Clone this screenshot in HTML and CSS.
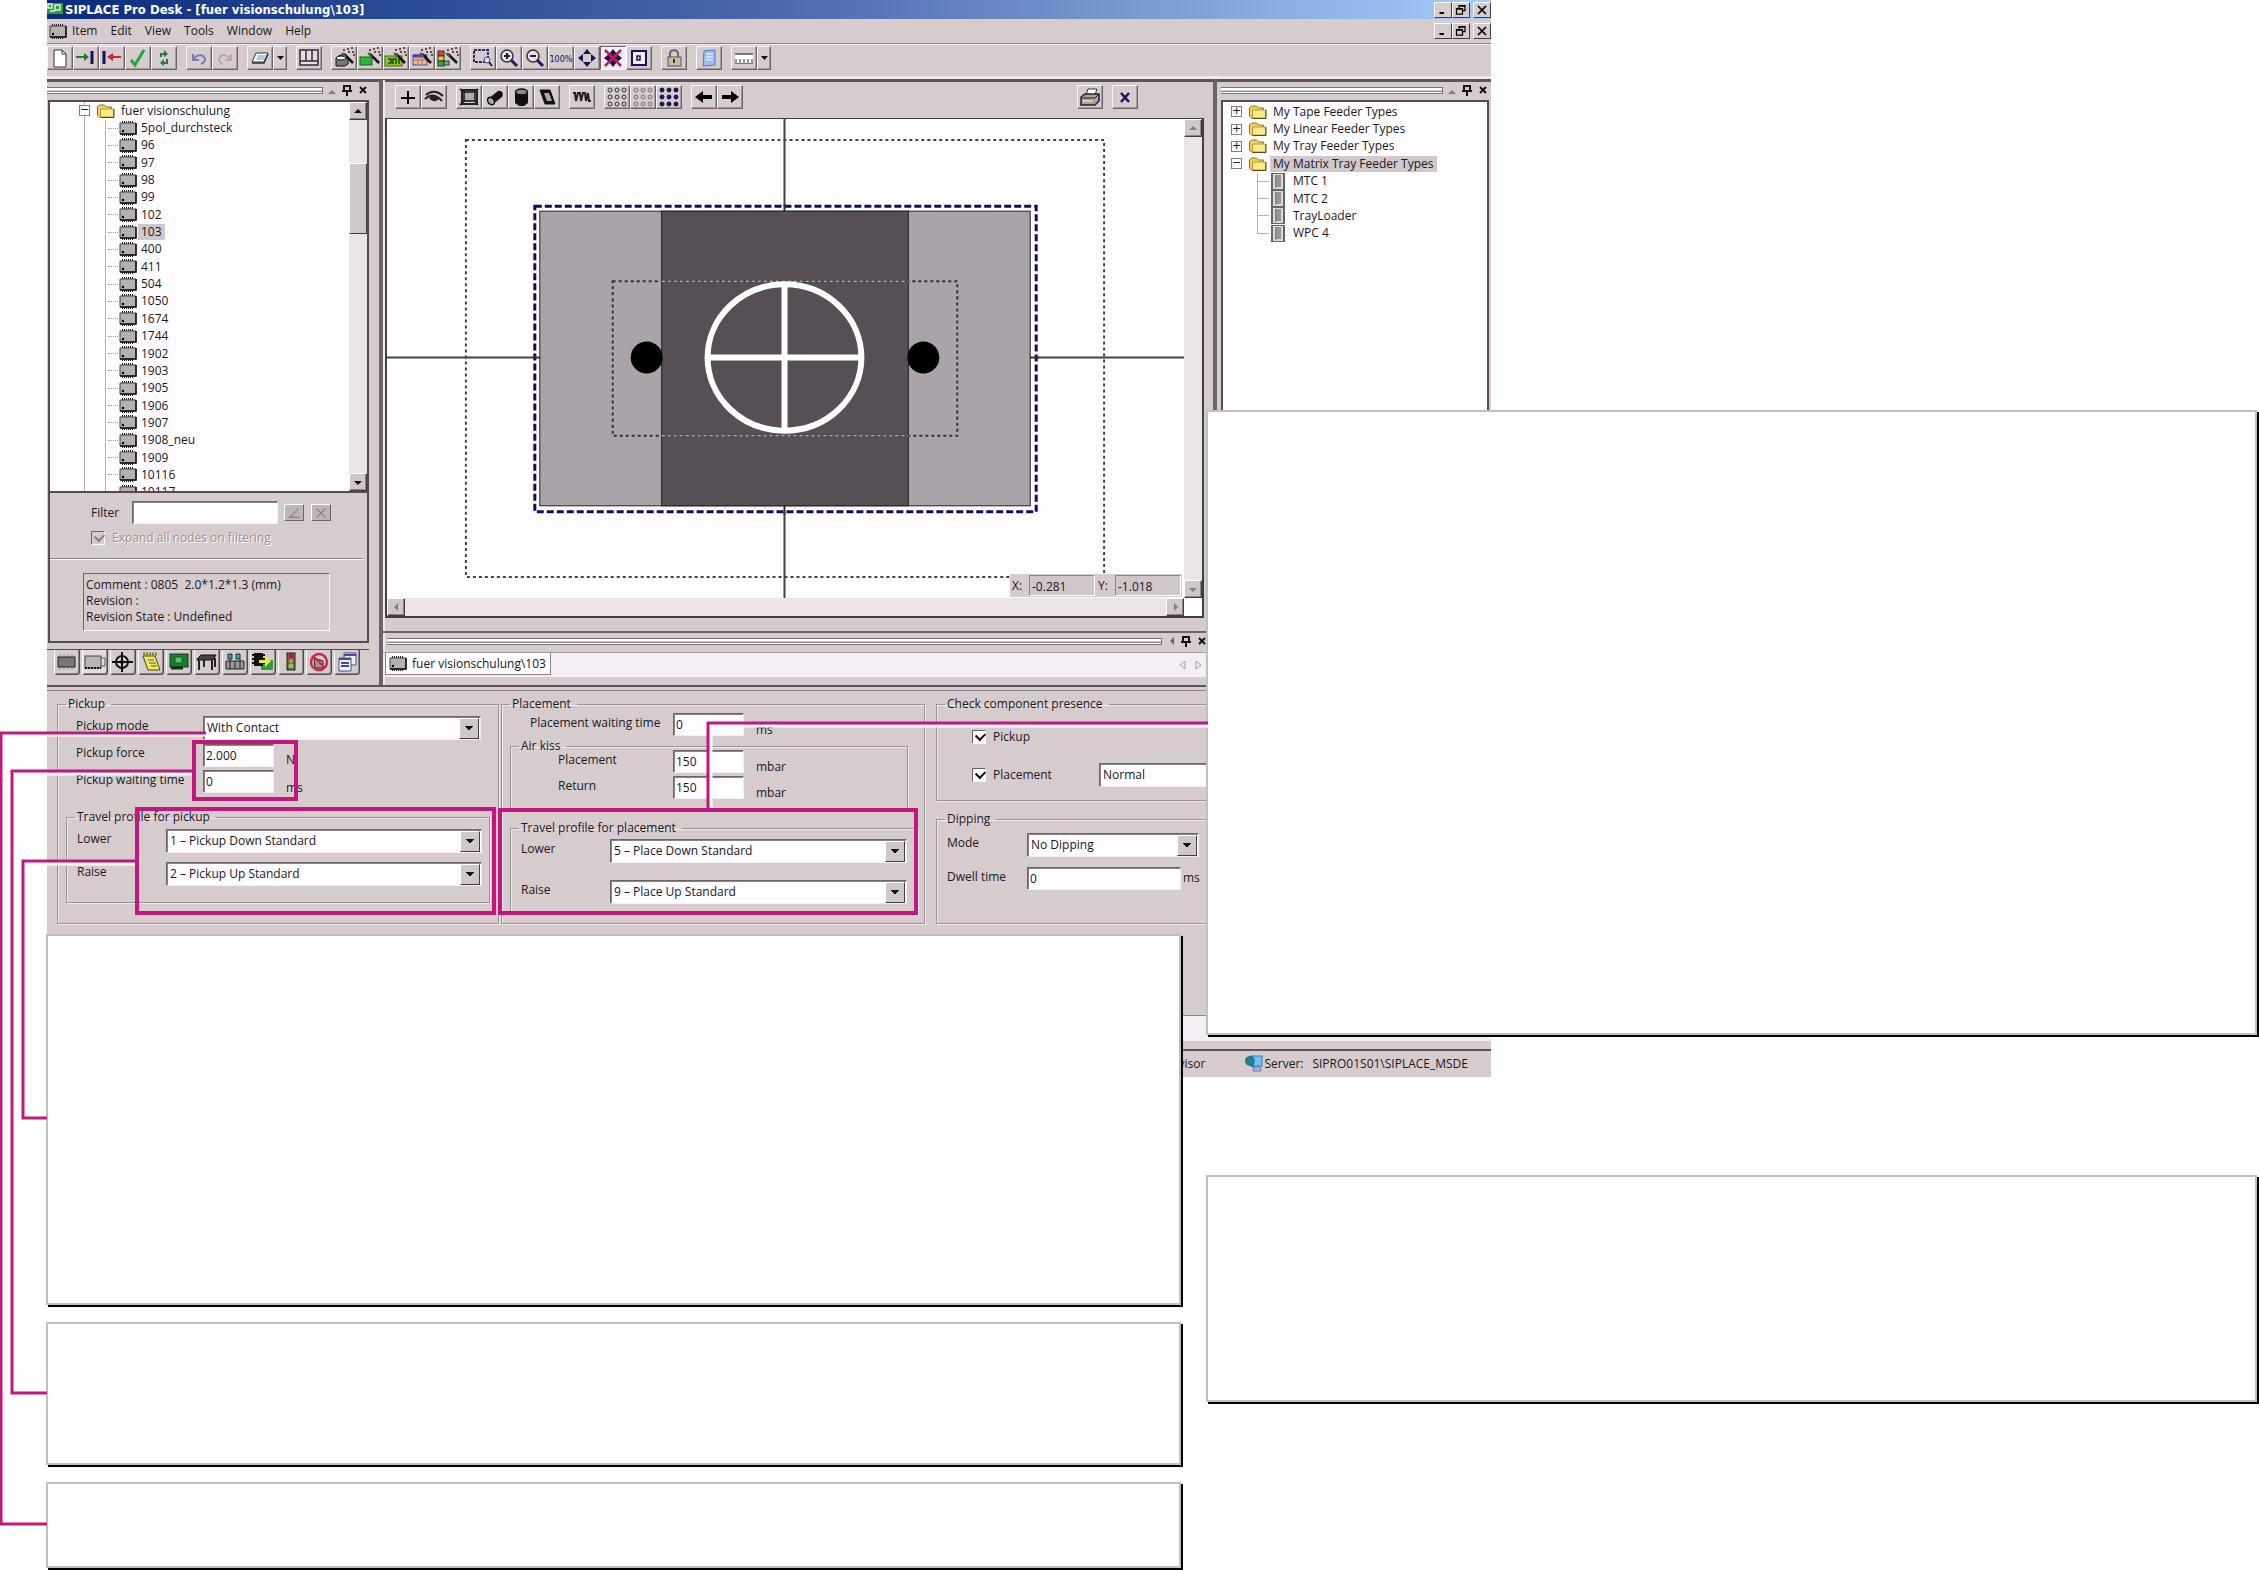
FILE: index.html
```html
<!DOCTYPE html>
<html lang="en">
<head>
<meta charset="utf-8">
<title>SIPLACE Pro Desk - [fuer visionschulung\103]</title>
<link rel="stylesheet" href="styles.css">
<script src="app.js" defer></script>
</head>
<body>
<svg width="0" height="0" class="defs" aria-hidden="true">
  <symbol id="i-chip" viewBox="0 0 18 15"><path d="M3 1h12M3 14h12" stroke="#222" stroke-width="2" stroke-dasharray="1 1"/><path d="M1 2h16v11H1z" fill="#b5b0b4" stroke="#444"/><path d="M17 2v11H1" stroke="#111" stroke-width="1.500" fill="none"/><circle cx="4" cy="10" r="1.200" fill="#000"/></symbol>
  <symbol id="i-folder" viewBox="0 0 18 16"><path d="M1 12V4l2-2h5l2 2h5v3h2v7H3z" fill="#f3d25c" stroke="#8a7420"/><path d="M4 6h13v8H4z" fill="#fbe98c" stroke="#b89a30"/><path d="M4 14.500h13.500V6" stroke="#5c4a10" fill="none"/></symbol>
  <symbol id="i-tray" viewBox="0 0 14 17"><path d="M0 0h14v17H0z" fill="#666"/><path d="M2 1h10v15H2z" fill="#ddd8dc"/><path d="M4 3h6M4 5h6M4 7h6M4 9h6M4 11h6M4 13h6" stroke="#555"/><path d="M5 2v13" stroke="#777"/></symbol>
  <symbol id="wand" viewBox="0 0 24 22"><path d="M12 7l9 9" stroke="#111" stroke-width="2.500"/><path d="M10 6l4 4" stroke="#555" stroke-width="2"/><path d="M11 3h2M15 2h2M19 1h2M16 5h2M20 5h2M21 8h2" stroke="#6b4a3a" stroke-width="2"/></symbol>
</svg>
<div class="page">
<main class="app">
  <header class="titlebar">
    <svg class="logo" viewBox="0 0 16 14"><rect width="16" height="11" fill="#2f9d3c"/><path d="M1 1h4v4H1zM8 2h5v5H8zM3 8h5" stroke="#d8f5d8" fill="none" stroke-width="1.500"/></svg>
    <h1>SIPLACE Pro Desk - [fuer visionschulung\103]</h1>
    <div class="winbtns"><button class="wb" data-i="min" aria-label="Minimize"></button><button class="wb" data-i="restore" aria-label="Restore"></button><button class="wb last" data-i="close" aria-label="Close"></button></div>
  </header>
  <nav class="menubar">
    <svg class="chip"><use href="#i-chip"/></svg>
    <button>Item</button><button>Edit</button><button>View</button><button>Tools</button><button>Window</button><button>Help</button>
    <div class="winbtns"><button class="wb" data-i="min" aria-label="Minimize document"></button><button class="wb" data-i="restore" aria-label="Restore document"></button><button class="wb last" data-i="close" aria-label="Close document"></button></div>
  </nav>
  <div class="toolbar main-tools">
    <div class="set"><button data-i="new"></button><button data-i="in"></button><button data-i="out"></button><button data-i="check"></button><button data-i="refresh"></button></div>
    <div class="set"><button data-i="undo"></button><button data-i="redo"></button></div>
    <div class="set"><button data-i="sheet"></button><button class="drop" data-i="down"></button></div>
    <div class="set"><button data-i="layout"></button></div>
    <div class="set"><button data-i="w1"></button><button data-i="w2"></button><button data-i="w3"></button><button data-i="w4"></button><button data-i="w5"></button></div>
    <div class="set"><button data-i="zoomrect"></button><button data-i="zoomin"></button><button data-i="zoomout"></button><button data-i="pct"></button><button data-i="move"></button><button class="pressed" data-i="nomove"></button><button data-i="center"></button></div>
    <div class="set"><button data-i="lock"></button></div>
    <div class="set"><button data-i="book"></button></div>
    <div class="set"><button data-i="ruler"></button><button class="drop" data-i="down"></button></div>
  </div>

  <div class="work">
    <aside class="left">
      <div class="grip"><i></i><svg class="pins"></svg></div>
      <div class="treebox">
        <ul class="tree items">
          <li class="root"><span class="pm">−</span><svg class="ico"><use href="#i-folder"/></svg><span>fuer visionschulung</span></li>
        </ul>
        <div class="vbar"><button class="sb up" aria-label="Scroll up"></button><div class="thumb"></div><button class="sb dn" aria-label="Scroll down"></button></div>
      </div>
      <div class="filterbox">
        <div class="frow"><label for="flt">Filter</label><input id="flt" type="text"><button class="mini" data-i="apply" aria-label="Apply"></button><button class="mini" data-i="clear" aria-label="Clear"></button></div>
        <label class="exp"><input type="checkbox" checked disabled><span>Expand all nodes on filtering</span></label>
        <hr>
        <div class="comment">Comment : 0805&nbsp; 2.0*1.2*1.3 (mm)<br>Revision :<br>Revision State : Undefined</div>
      </div>
      <div class="tabs"><button data-i="t1"></button><button class="on" data-i="t2"></button><button data-i="t3"></button><button data-i="t4"></button><button data-i="t5"></button><button data-i="t6"></button><button data-i="t7"></button><button data-i="t8"></button><button data-i="t9"></button><button data-i="t10"></button><button data-i="t11"></button></div>
    </aside>

    <section class="center">
      <div class="toolbar view-tools">
        <div class="set"><button data-i="plus"></button><button data-i="eye"></button></div>
        <div class="set"><button data-i="body"></button><button data-i="cyl"></button><button data-i="can"></button><button data-i="para"></button></div>
        <div class="set"><button data-i="leads"></button></div>
        <div class="set"><button data-i="grid1"></button><button data-i="grid2"></button><button data-i="grid3"></button></div>
        <div class="set"><button data-i="larr"></button><button data-i="rarr"></button></div>
        <div class="set right"><button data-i="print"></button></div>
        <div class="set"><button data-i="x"></button></div>
      </div>
      <div class="canvas">
        <svg class="drawing" viewBox="387 119 798 478" preserveAspectRatio="none">
          <path d="M387 357h798M785 119v478" stroke="#444" stroke-width="2"/>
          <rect x="466" y="140" width="639" height="436" fill="none" stroke="#444" stroke-width="2" stroke-dasharray="3 3"/>
          <rect x="535" y="206" width="502" height="305" fill="#fffdff" stroke="#120c60" stroke-width="3" stroke-dasharray="7 3"/>
          <path d="M785 204v10M785 502v12M533 357h10M1028 357h12" stroke="#333" stroke-width="2"/>
          <rect x="540" y="211" width="491" height="294" fill="#aaa3aa" stroke="#222"/>
          <rect x="662" y="211" width="247" height="294" fill="#565056" stroke="#222"/>
          <rect x="613" y="281" width="345" height="154" fill="none" stroke="#333" stroke-dasharray="3 3" stroke-width="2"/>
          <path d="M662 281h247M662 435h247" stroke="#ddd" stroke-dasharray="3 3"/>
          <circle cx="647" cy="357" r="16"/><circle cx="924" cy="357" r="16"/>
          <ellipse cx="785" cy="357" rx="77" ry="73" fill="none" stroke="#fff" stroke-width="6"/>
          <path d="M708 357h154M785 284v146" stroke="#fff" stroke-width="6"/>
        </svg>
        <div class="vbar dim"><button class="sb up" aria-label="Scroll up"></button><button class="sb dn" aria-label="Scroll down"></button></div>
        <div class="hbar"><button class="sb lf" aria-label="Scroll left"></button><button class="sb rt" aria-label="Scroll right"></button></div>
        <div class="coords"><span>X:</span><output>-0.281</output><span>Y:</span><output>-1.018</output></div>
      </div>
      <div class="dock">
        <div class="grip"><i></i><svg class="pins to-left"></svg></div>
        <div class="doctabs"><button class="doctab"><svg class="chip"><use href="#i-chip"/></svg>fuer visionschulung\103</button><svg class="nav" viewBox="0 0 24 12"><path d="M6 2v8L1 6zM17 2v8l5-4z" fill="none" stroke="#a39ba0"/></svg></div>
      </div>
    </section>

    <aside class="feeders">
      <div class="grip"><i></i><svg class="pins"></svg></div>
      <div class="feederbox">
        <ul class="tree feed">
          <li class="root"><span class="pm">+</span><svg class="ico"><use href="#i-folder"/></svg><span>My Tape Feeder Types</span></li>
          <li class="root"><span class="pm">+</span><svg class="ico"><use href="#i-folder"/></svg><span>My Linear Feeder Types</span></li>
          <li class="root"><span class="pm">+</span><svg class="ico"><use href="#i-folder"/></svg><span>My Tray Feeder Types</span></li>
          <li class="root"><span class="pm">−</span><svg class="ico"><use href="#i-folder"/></svg><span class="sel">My Matrix Tray Feeder Types</span></li>
          <li class="leaf"><svg class="tico"><use href="#i-tray"/></svg><span>MTC 1</span></li>
          <li class="leaf"><svg class="tico"><use href="#i-tray"/></svg><span>MTC 2</span></li>
          <li class="leaf"><svg class="tico"><use href="#i-tray"/></svg><span>TrayLoader</span></li>
          <li class="leaf"><svg class="tico"><use href="#i-tray"/></svg><span>WPC 4</span></li>
        </ul>
      </div>
    </aside>
  </div>

  <form class="props">
    <fieldset class="pickup">
      <legend>Pickup</legend>
      <div class="rows prow">
        <label for="pm">Pickup mode</label><span class="combo wide"><select id="pm"><option>With Contact</option></select></span>
        <label for="pf">Pickup force</label><input id="pf" type="text" value="2.000"><span class="unit">N</span>
        <label for="pw">Pickup waiting time</label><input id="pw" type="text" value="0"><span class="unit">ms</span>
      </div>
      <fieldset class="travel">
        <legend>Travel profile for pickup</legend>
        <div class="rows trow">
          <label for="pl">Lower</label><span class="combo"><select id="pl"><option>1 – Pickup Down Standard</option></select></span>
          <label for="pr">Raise</label><span class="combo"><select id="pr"><option>2 – Pickup Up Standard</option></select></span>
        </div>
      </fieldset>
    </fieldset>
    <fieldset class="placement">
      <legend>Placement</legend>
      <div class="rows wrow"><label for="qw">Placement waiting time</label><input id="qw" type="text" value="0"><span class="unit">ms</span></div>
      <fieldset class="kiss">
        <legend>Air kiss</legend>
        <div class="rows krow">
          <label for="kp">Placement</label><input id="kp" type="text" value="150"><span class="unit">mbar</span>
          <label for="kr">Return</label><input id="kr" type="text" value="150"><span class="unit">mbar</span>
        </div>
      </fieldset>
      <fieldset class="travel2">
        <legend>Travel profile for placement</legend>
        <div class="rows t2row">
          <label for="ql">Lower</label><span class="combo"><select id="ql"><option>5 – Place Down Standard</option></select></span>
          <label for="qr">Raise</label><span class="combo"><select id="qr"><option>9 – Place Up Standard</option></select></span>
        </div>
      </fieldset>
    </fieldset>
    <div class="third">
      <fieldset class="presence">
        <legend>Check component presence</legend>
        <label class="ck"><input type="checkbox" checked><span>Pickup</span></label>
        <div class="ckrow"><label class="ck"><input type="checkbox" checked><span>Placement</span></label><span class="combo"><select aria-label="Placement check"><option>Normal</option></select></span></div>
      </fieldset>
      <fieldset class="dipping">
        <legend>Dipping</legend>
        <div class="rows drow">
          <label for="dm">Mode</label><span class="combo wide"><select id="dm"><option>No Dipping</option></select></span>
          <label for="dt">Dwell time</label><input id="dt" type="text" value="0"><span class="unit">ms</span>
        </div>
      </fieldset>
    </div>
  </form>
  <div class="strip"></div>
  <footer class="status"><span>Supervisor</span><svg viewBox="0 0 20 18"><rect x="7" y="1" width="11" height="10" fill="#6fc4ee" stroke="#3a78b8"/><circle cx="6" cy="6" r="5" fill="#1d8a78"/><path d="M2 5c2-3 5-3 7-1M6 9l4 3" stroke="#2b5fc0" stroke-width="2" fill="none"/><path d="M10 12h6l1 4H9z" fill="#a9b8e4" stroke="#6678b8"/></svg><span>Server:</span><span class="srv">SIPRO01S01\SIPLACE_MSDE</span></footer>
</main>
<div class="notes notes-left"><div class="note n1"></div><div class="note n2"></div><div class="note n3"></div></div>
<div class="notes notes-right"><div class="note n4"></div><div class="note n5"></div></div>
<svg class="marks" width="1208" height="1570" aria-hidden="true">
  <g fill="none" stroke="#fff" stroke-width="3"><path d="M47 735h159M47 774h149M47 864h92M708 726h500M711 726v86"/></g>
  <g fill="none" stroke="#c2187e" stroke-width="3"><path d="M206 733H1v791h46M195 771H12v622h35M137 861H23v257h24M708 810V723h500"/></g>
  <g fill="none" stroke="#c2187e" stroke-width="4"><rect x="194" y="742" width="102" height="57"/><rect x="137" y="809" width="357" height="104"/><rect x="500" y="810" width="416" height="103"/></g>
</svg>
</div>
</body>
</html>
```
FILE: styles.css
```css
* { box-sizing: border-box; }
body { margin: 0; background: #fff; color: #1c181c; font: 12px/16px "Open Sans", "Noto Sans", sans-serif; }
button, input, select { font: inherit; color: inherit; margin: 0; padding: 0; border-radius: 0; }
.defs { position: absolute; }
.page { position: relative; display: grid; grid-template-columns: 47px 1134fr 26px 284fr 766fr 2px; min-height: 1570px; overflow: hidden; }
.app { grid-area: 1 / 2 / 2 / 5; align-self: start; background: #d6cccd; min-width: 0; }

.titlebar { display: flex; align-items: center; height: 19px; background: linear-gradient(90deg, #0c2a7c, #1d3f8c 15%, #4b68ab 50%, #a6caf8); color: #fff; }
.logo { width: 16px; height: 14px; margin-right: 2px; }
.titlebar h1 { margin: 0; font: bold 13px/18px "DejaVu Sans Condensed", "DejaVu Sans", sans-serif; }
.winbtns { display: flex; margin-left: auto; }
.wb { width: 18px; height: 16px; border: 1px solid; border-color: #fff #443d44 #443d44 #fff; background: #d6cccd; display: grid; place-items: center; }
.wb svg { width: 12px; height: 12px; }
.wb.last { margin-left: 3px; }
.menubar { display: flex; align-items: center; height: 25px; border-bottom: 1px solid #8c8488; padding-left: 2px; }
.menubar button:not(.wb) { background: none; border: 0; margin-right: 13px; }
.chip { width: 18px; height: 15px; margin-right: 5px; flex: none; }
.toolbar { display: flex; gap: 9px; }
.main-tools { height: 32px; padding-top: 1px; border-top: 1px solid #f4ecf0; }
.set { display: flex; }
.toolbar button { width: 26px; height: 24px; border: 1px solid; border-color: #fbf6fa #6b646a #6b646a #fbf6fa; box-shadow: inset -1px -1px #a39ba0; background: #d6cccd; display: grid; place-items: center; place-content: center; }
.toolbar button svg { width: 24px; height: 22px; }
.toolbar .drop { width: 14px; overflow: hidden; }
.toolbar .pressed { background: #f4edf3; border-color: #6b646a #fff #fff #6b646a; box-shadow: none; }

.work { display: grid; grid-template-columns: 332px 1fr 278px; border-top: 3px solid #f2e9ee; box-shadow: inset 0 3px #5c545c; height: 609px; }
.work > * { min-width: 0; }
.left { padding: 3px 10px 0 0; display: flex; flex-direction: column; }
.grip { display: flex; align-items: center; height: 16px; margin-bottom: 2px; }
.grip i { flex: 1; height: 7px; border: 1px solid #7c7479; border-left: 0; background: linear-gradient(#fff 2px, #d6cccd 2px, #d6cccd 3px, #8c8489 3px, #8c8489 4px, #fff 4px); }
.pins { width: 46px; height: 14px; }
.treebox { display: flex; height: 393px; margin-left: 1px; border: 2px solid #544c54; background: #fffcff; overflow: hidden; flex: none; }
.tree { list-style: none; margin: 0; padding: 0; display: grid; grid-auto-rows: 1fr; flex: 1; align-self: start; }
.items { height: 399px; background: linear-gradient(#b8b0b5, #b8b0b5) 34px 0 / 1px 100% no-repeat, linear-gradient(#b8b0b5, #b8b0b5) 55px 18px / 1px 100% no-repeat; }
.tree li { display: flex; align-items: center; white-space: nowrap; }
.items .root { padding-left: 29px; }
.pm { width: 11px; height: 11px; border: 1px solid #857d83; background: #fff; font: 11px/8px "DejaVu Sans", sans-serif; text-align: center; margin-right: 6px; flex: none; }
.ico { width: 19px; height: 16px; margin-right: 3px; flex: none; }
.tree li > span:last-child { padding: 0 3px; }
.items .leaf { padding-left: 58px; }
.items .leaf::before { content: ""; width: 10px; border-top: 1px dotted #a39ba0; margin-right: 1px; }
.items .leaf .ico { width: 18px; height: 15px; margin-right: 1px; }
.sel { background: #d0c8cb; }
.vbar { width: 18px; flex: none; display: flex; flex-direction: column; background: #ebe5ea; }
.sb { width: 18px; height: 18px; flex: none; border: 1px solid; border-color: #fff #443d44 #443d44 #fff; box-shadow: inset -1px -1px #8c8489; background: #d0c7ca; display: grid; place-items: center; }
.sb::before { content: ""; border: 4px solid transparent; }
.up::before { border-bottom-color: #111; margin-top: -5px; }
.dn::before { border-top-color: #111; margin-bottom: -5px; }
.lf::before { border-right-color: #857d83; margin-left: -5px; }
.rt::before { border-left-color: #857d83; margin-right: -5px; }
.dim .up::before { border-bottom-color: #857d83; }
.dim .dn::before { border-top-color: #857d83; }
.dn { margin-top: auto; }
.thumb { height: 71px; margin-top: 43px; background: #d0c7ca; border: 1px solid; border-color: #fff #443d44 #443d44 #fff; }
.filterbox { height: 150px; margin-left: 1px; border: 2px solid #544c54; border-top: 0; padding: 8px 4px 0 0; flex: none; }
.frow { display: flex; align-items: center; padding-left: 41px; }
.frow label { width: 41px; }
input[type=text] { height: 23px; width: 71px; padding-left: 2px; border: 1px solid; border-color: #6b646a #f4edf3 #f4edf3 #6b646a; box-shadow: inset 1px 1px #8c8489; background: #fffcff; outline: 0; }
.frow input[type=text] { width: 146px; margin-right: 6px; }
.mini { width: 20px; height: 17px; margin-right: 7px; border: 1px solid; border-color: #fff #6b646a #6b646a #fff; background: #bdb5b9; display: grid; place-items: center; }
.mini svg { width: 14px; height: 12px; }
.exp { display: flex; align-items: center; gap: 7px; height: 16px; margin: 6px 0 12px 41px; color: #9a9297; text-shadow: 1px 1px #fff; }
input[type=checkbox] { appearance: none; width: 14px; height: 14px; border: 1px solid; border-color: #6b646a #fff #fff #6b646a; background: #fffcff; position: relative; }
input[type=checkbox]::after { content: ""; position: absolute; left: 3px; top: 1px; width: 7px; height: 5px; border: solid #111; border-width: 0 0 2px 2px; rotate: -45deg; }
input[type=checkbox]:disabled { background: #d6cccd; }
input[type=checkbox]:disabled::after { border-color: #857d83; }
hr { margin: 0; border: 0; border-top: 1px solid #8c8489; border-bottom: 1px solid #fff; }
.comment { margin: 13px 0 0 33px; width: 247px; height: 58px; padding: 3px 2px; border: 1px solid; border-color: #6b646a #fff #fff #6b646a; }
.tabs { display: flex; gap: 2px; margin-top: 6px; padding-left: 7px; border-top: 1px solid #544c54; }
.tabs button { width: 26px; height: 25px; border: 1px solid #544c54; border-top: 0; border-left-color: #fff; border-radius: 0 0 3px 3px; background: #d6cccd; box-shadow: inset -1px -1px #8c8489; display: grid; place-items: center; }
.tabs .on { background: #e3dadd; }
.tabs svg { width: 24px; height: 22px; }

.center { border-left: 4px solid #6b646a; box-shadow: inset 2px 0 #f2e9ee; padding: 5px 0 0 2px; display: flex; flex-direction: column; margin-top: 1px; }
.view-tools { height: 33px; padding-left: 10px; }
.view-tools .right { margin-left: auto; }
.view-tools .set:last-child { margin-right: 75px; }
.canvas { position: relative; margin-right: 9px; height: 500px; border: 2px solid #443d44; border-width: 1px 2px 2px 2px; display: grid; grid-template: 1fr 18px / 1fr 18px; background: #fffcff; }
.drawing { width: 100%; height: 100%; min-height: 0; display: block; }
.hbar { display: flex; justify-content: space-between; background: #ebe5ea; }
.coords { position: absolute; right: 20px; bottom: 19px; display: flex; align-items: center; height: 23px; background: #d6cccd; }
.coords span { padding: 0 6px 0 2px; width: 19px; white-space: nowrap; }
.coords output { width: 66px; height: 21px; line-height: 21px; padding-left: 2px; border: 1px solid; border-color: #8c8489 #fff #fff #8c8489; margin-right: 1px; background: #cfc6c9; }
.dock { border-top: 2px solid #6b646a; margin: 13px 5px 0 -2px; }
.dock .grip { height: 14px; margin: 1px 0 4px 4px; }
.doctabs { height: 25px; display: flex; align-items: flex-start; background: #f4edf3; border-top: 1px solid #a39ba0; padding-left: 2px; }
.doctab { display: flex; align-items: center; height: 22px; background: #fffcff; border: 1px solid #8c8489; border-top: 0; padding: 0 4px 0 3px; }
.nav { width: 24px; height: 12px; margin: 6px 5px 0 auto; }

.feeders { border-left: 4px solid #6b646a; padding: 3px 2px 0 4px; }
.feederbox { height: 500px; border: 2px solid #544c54; background: #fffcff; padding: 1px 0 0 8px; }
.feed { height: 139px; }
.feed .leaf { padding-left: 40px; background: linear-gradient(#b8b0b5, #b8b0b5) 26px 0 / 1px 100% no-repeat, linear-gradient(#b8b0b5, #b8b0b5) 26px 50% / 12px 1px no-repeat; }
.feed .leaf:last-child { background: linear-gradient(#b8b0b5, #b8b0b5) 26px 0 / 1px 50% no-repeat, linear-gradient(#b8b0b5, #b8b0b5) 26px 50% / 12px 1px no-repeat; }
.tico { width: 14px; height: 17px; margin-right: 5px; }

.props { display: grid; grid-template-columns: 442px 424px 1fr; column-gap: 2px; height: 330px; padding: 9px 0 0 10px; border-top: 2px solid #5c545c; box-shadow: inset 0 3px #d6cccd, inset 0 4px #8c8489; align-items: start; }
.third { padding-left: 9px; display: grid; gap: 10px; }
fieldset { margin: 0; padding: 0 0 0 8px; border: 1px solid #9a9297; box-shadow: 1px 1px #f2e9ee, inset 1px 1px #f2e9ee; min-width: 0; }
legend { margin: 0; padding: 0 6px 0 2px; height: 16px; }
.props > fieldset { height: 228px; }
.rows { display: grid; }
.rows label { align-self: center; margin-bottom: 4px; }
.unit { align-self: end; margin-bottom: -2px; }
.combo { display: grid; height: 24px; border: 1px solid; border-color: #6b646a #f4edf3 #f4edf3 #6b646a; box-shadow: inset 1px 1px #8c8489; position: relative; background: #fffcff; }
.combo select { appearance: none; border: 0; background: none; outline: 0; padding-left: 3px; width: 100%; }
.combo::after { content: ""; position: absolute; right: 1px; top: 1px; width: 18px; bottom: 0; border: 1px solid; border-color: #fff #443d44 #443d44 #fff; background: linear-gradient(#111, #111) 50% 7px / 8px 1px no-repeat, linear-gradient(#111, #111) 50% 8px / 6px 1px no-repeat, linear-gradient(#111, #111) 50% 9px / 4px 1px no-repeat, linear-gradient(#111, #111) 50% 10px / 2px 1px no-repeat, #d0c7ca; pointer-events: none; }
.wide { grid-column: span 2; }
.prow { grid-template-columns: 127px 83px 195px; grid-template-rows: 24px 22px 24px; row-gap: 4px; padding: 4px 0 0 10px; }
.travel { margin: 15px 8px 0 0; height: 94px; }
.trow { grid-template-columns: 89px 316px; row-gap: 9px; padding: 4px 0 0 2px; }
.wrow { grid-template-columns: 143px 83px 1fr; padding: 1px 0 2px 20px; }
.kiss { height: 73px; margin: 0 16px 0 0; }
.krow { grid-template-columns: 115px 83px 1fr; padding-left: 39px; row-gap: 3px; margin-top: -4px; }
.travel2 { margin: 9px 6px 0 0; height: 94px; }
.t2row { grid-template-columns: 89px 297px; row-gap: 17px; padding: 3px 0 0 2px; }
.presence { height: 105px; border-right: 0; }
.ck { display: flex; align-items: center; gap: 7px; padding-left: 27px; height: 16px; }
.presence > .ck { margin-top: 17px; }
.ckrow { display: flex; align-items: center; margin-top: 18px; }
.ckrow .ck { width: 154px; }
.ckrow .combo { flex: 1; margin-right: 8px; }
.dipping { height: 113px; border-right: 0; }
.drow { grid-template-columns: 80px 156px 16px; row-gap: 10px; padding: 6px 0 0 2px; }
.drow input[type=text] { width: 154px; }
.drow .unit { margin-bottom: 4px; }
.strip { height: 34px; background: #f4edf3; border-top: 1px solid #8c8489; border-bottom: 8px solid #d6cccd; }
.status { display: flex; align-items: center; justify-content: flex-end; height: 28px; border-top: 2px solid #5c545c; padding-right: 23px; }
.status svg { width: 20px; height: 18px; margin-left: 39px; }
.srv { margin-left: 9px; }

.notes { display: flex; flex-direction: column; z-index: 1; margin-left: -1px; }
.notes-left { grid-area: 1 / 2 / 2 / 3; padding-top: 934px; gap: 17px; }
.notes-right { grid-area: 1 / 4 / 2 / 6; padding-top: 410px; gap: 140px; }
.note { background: #fff; border: 2px solid #c0c0c0; box-shadow: 2px 2px #000; }
.n1 { height: 371px; }
.n2 { height: 143px; }
.n3 { height: 86px; }
.n4 { height: 625px; }
.n5 { height: 227px; }
.marks { position: absolute; left: 0; top: 0; z-index: 2; pointer-events: none; }
```
FILE: app.js
```javascript
const wand = '<use href="#wand"/>';
const dots = (fill, stroke) => [5, 12, 19].map(x => [4, 11, 18].map(y => `<circle cx="${x}" cy="${y}" r="2" fill="${fill}" stroke="${stroke}"/>`).join('')).join('');
const lens = '<circle cx="10" cy="9" r="6" fill="#e8e0ec" stroke="#333" stroke-width="1.5"/><path d="M14 13l6 6" stroke="#221a60" stroke-width="3"/>';
const move = '<path d="M12 2l4 5H8zM12 20l4-5H8zM3 11l5-4v8zM21 11l-5-4v8z" fill="#181250"/>';
const icons = {
  min: '<path d="M5 17h9" stroke="#000" stroke-width="4"/>',
  restore: '<path d="M8 7V2h12v10h-4M3 8h12v11H3zM3 9h12M8 3h12" stroke="#000" stroke-width="2.5" fill="none"/>',
  close: '<path d="M4 3l16 16M20 3L4 19" stroke="#000" stroke-width="3.5"/>',
  new: '<path d="M6 3h8l4 4v13H6z" fill="#fff" stroke="#334"/><path d="M14 3v4h4" fill="none" stroke="#334"/>',
  in: '<path d="M2 10h11" stroke="#1c7a34" stroke-width="2"/><path d="M10 6l5 4-5 4z" fill="#1c7a34"/><path d="M18 4v13" stroke="#181250" stroke-width="3"/>',
  out: '<path d="M10 10h11" stroke="#d42030" stroke-width="2"/><path d="M13 6l-6 4 6 4z" fill="#d42030"/><path d="M4 4v13" stroke="#181250" stroke-width="3"/>',
  check: '<path d="M5 13l4 5L18 3" stroke="#1ea838" stroke-width="3" fill="none"/>',
  refresh: '<path d="M9 10V7h4M15 12v4h-4" stroke="#237a44" stroke-width="2" fill="none"/><path d="M12 3l4 4-4 3zM12 12l-4 4 4 3z" fill="#237a44"/>',
  undo: '<path d="M6 7v6h6M7 12c3-5 10-5 11 0 0 3-2 4-4 5" stroke="#7a78b4" stroke-width="2" fill="none"/>',
  redo: '<path d="M18 7v6h-6M17 12c-3-5-10-5-11 0 0 3 2 4 4 5" stroke="#aaa2a8" stroke-width="1.5" fill="none"/>',
  sheet: '<path d="M8 6h12l-4 9H4z" fill="#fff" stroke="#333"/><path d="M10 8h8l-2 5H8z" fill="#a8ccec"/><path d="M4 16h12l4-9" stroke="#334" stroke-width="1.500" fill="none"/>',
  down: '<path d="M9 9h7l-3.500 4z" fill="#111"/>',
  layout: '<path d="M3 3h18v15H3zM3 14h18M9 3v11M15 3v11" stroke="#302838" stroke-width="1.500" fill="#e6dde2"/>',
  w1: '<path d="M4 11l4-3h6l2 3v6l-3 2H4z" fill="#777" stroke="#111"/><ellipse cx="9" cy="11" rx="5" ry="2" fill="#eee" stroke="#111"/>' + wand,
  w2: '<rect x="2" y="10" width="12" height="8" fill="#2db83c" stroke="#176020"/>' + wand,
  w3: '<rect x="1" y="9" width="17" height="10" fill="#8cc820" stroke="#3a6a10"/><path d="M4 12h3v4H4M9 17v-5h3v5M15 12v5" stroke="#184a10" stroke-width="1.500" fill="none"/>' + wand,
  w4: '<rect x="3" y="8" width="14" height="10" fill="#f2b78e" stroke="#4850a8"/><path d="M3 9h14" stroke="#3444c8" stroke-width="3"/><path d="M3 13h14M8 9v9M12 9v9" stroke="#a87868"/>' + wand,
  w5: '<rect x="2" y="4" width="6" height="5" fill="#e04030" stroke="#333"/><rect x="2" y="9" width="6" height="5" fill="#f0c830" stroke="#333"/><rect x="2" y="14" width="6" height="5" fill="#30b048" stroke="#333"/><rect x="8" y="14" width="5" height="4" fill="#60c070" stroke="#333"/>' + wand,
  zoomrect: '<path d="M3 3h14v12H3z" stroke="#302870" stroke-width="2" stroke-dasharray="3 1" fill="none"/><circle cx="16" cy="13" r="3" fill="#e6dde2" stroke="#447"/><path d="M18 15l3 4" stroke="#221a60" stroke-width="2"/>',
  zoomin: lens + '<path d="M7 9h6M10 6v6" stroke="#222" stroke-width="2"/>',
  zoomout: lens + '<path d="M7 9h6" stroke="#222" stroke-width="2"/>',
  pct: '<text x="12" y="15" text-anchor="middle" font-family="DejaVu Sans Condensed" font-size="9" fill="#181250">100%</text>',
  move: move,
  nomove: move + '<circle cx="12" cy="11" r="4" fill="#181250"/><path d="M4 3l16 16M20 3L4 19" stroke="#c41c54" stroke-width="2.500"/>',
  center: '<path d="M5 4h14v14H5z" fill="#f4edf3" stroke="#181250" stroke-width="2"/><path d="M10 9h3v4h-3z" fill="none" stroke="#181250" stroke-width="1.500"/>',
  lock: '<path d="M8 10V7c0-5 8-5 8 0v3" stroke="#666" stroke-width="2" fill="none"/><rect x="6" y="10" width="13" height="9" fill="#c8c09a" stroke="#555"/><path d="M12 12v4" stroke="#333" stroke-width="2"/>',
  book: '<path d="M7 4l11-1v15l-12 1z" fill="#9cbcf4" stroke="#5878c0"/><path d="M9 7h7M9 10h7M9 13h7" stroke="#fff"/>',
  ruler: '<path d="M3 7h18M3 16h18" stroke="#222"/><path d="M3 8h18v8H3z" fill="#fff"/><path d="M4 16v-4M8 16v-4M12 16v-4M16 16v-4M20 16v-4" stroke="#333"/>',
  plus: '<path d="M5 12h14M12 5v13" stroke="#000" stroke-width="2"/>',
  eye: '<path d="M4 9c5-5 12-4 17 1M3 13c5-5 11-5 17 2" stroke="#222" fill="none" stroke-width="2"/><path d="M7 12c3-3 7-3 10 1-3 3-7 3-10-1z" fill="#222"/>',
  body: '<path d="M7 6h11v9H7z" fill="#aaa" stroke="#111" stroke-width="1.500"/><path d="M3 3l4 3M21 3l-3 3M3 19l4-4M21 19l-3-4M5 4h15v14H5z" stroke="#222" stroke-width="2" fill="none"/>',
  cyl: '<path d="M5 13L15 5c4-1 6 3 4 6L10 18z" fill="#111"/><ellipse cx="8" cy="15" rx="3" ry="4" transform="rotate(-40 8 15)" fill="#aaa" stroke="#111" stroke-width="1.500"/>',
  can: '<path d="M6 6v11l4 3h5l4-3V6z" fill="#111"/><ellipse cx="12.500" cy="6" rx="6" ry="3" fill="#888" stroke="#111" stroke-width="1.500"/>',
  para: '<path d="M5 4h10l5 14H10z" fill="#111" stroke="#111"/><path d="M9 7h5l3 8h-5z" fill="#aaa"/>',
  leads: '<path d="M3 7h2l1 8 2-8h2l1 8 2-8h2l1 8 2-8 1 8h2" stroke="#222" stroke-width="2" fill="none"/>',
  grid1: dots('none', '#333'), grid2: dots('#c8c0c4', '#777'), grid3: dots('#181250', '#181250'),
  larr: '<path d="M3 11l8-6v4h9v4h-9v4z" fill="#000"/>', rarr: '<path d="M21 11l-8-6v4H4v4h9v4z" fill="#000"/>',
  print: '<path d="M8 9l2-6h9l-2 6" fill="#fff" stroke="#333"/><path d="M3 11l4-3h14v7l-4 4H3z" fill="#a8a0b0" stroke="#222" stroke-width="1.500"/><path d="M5 15h10" stroke="#e0d860" stroke-width="2"/><path d="M4 12h13l3-3" stroke="#222" fill="none"/>',
  x: '<path d="M8 7l8 9M16 7l-8 9" stroke="#181250" stroke-width="2.500"/>',
  apply: '<path d="M2 19h20M5 18L20 3" stroke="#857d83" stroke-width="2" fill="none"/>', clear: '<path d="M4 3l16 16M20 3L4 19" stroke="#857d83" stroke-width="2.500"/>',
  t1: '<path d="M5 3v16M9 3v16M13 3v16M17 3v16" stroke="#999"/><rect x="3" y="6" width="17" height="10" fill="#777" stroke="#222"/>',
  t2: '<path d="M17 7h5v8h-5" stroke="#555" fill="none"/><rect x="2" y="5" width="16" height="12" fill="#bbb3b8" stroke="#444"/><path d="M2 17h16" stroke="#111" stroke-width="2" stroke-dasharray="2 1"/>',
  t3: '<circle cx="11" cy="11" r="6" fill="none" stroke="#111" stroke-width="2"/><path d="M11 1v20M1 11h21" stroke="#111" stroke-width="2"/><circle cx="11" cy="11" r="2"/>',
  t4: '<path d="M4 5h12l5 14H9z" fill="#f2e850" stroke="#444"/><path d="M4 3h14" stroke="#8a8420" stroke-width="3" stroke-dasharray="2 1"/><path d="M9 9h6M10 12h7M12 15h6" stroke="#555"/>',
  t5: '<rect x="3" y="3" width="18" height="13" fill="#207a34" stroke="#0a3a14"/><rect x="8" y="6" width="7" height="6" fill="#58c070" stroke="#062"/><path d="M4 17h12" stroke="#0a3a14" stroke-width="3"/>',
  t6: '<path d="M2 8l4-4h15l-3 5H2z" fill="#444" stroke="#111"/><path d="M4 9v10M9 9v7M17 9v10M20 7v9" stroke="#222" stroke-width="2"/>',
  t7: '<path d="M5 3h4v5H5zM13 3h4v5h-4z" fill="#30a8b0" stroke="#133"/><path d="M3 10h18v8H3z" fill="#999" stroke="#222"/><path d="M7 8v10M12 10v8M17 8v10" stroke="#222"/>',
  t8: '<rect x="10" y="9" width="12" height="10" fill="#28a03c"/><path d="M3 2h9v13H3z" fill="#111"/><path d="M1 4h13M1 8h13M1 12h13" stroke="#111" stroke-width="2"/><path d="M8 9h6V5l6 5-6 6v-4H8z" fill="#f0e840"/>',
  t9: '<rect x="8" y="2" width="8" height="17" fill="#8a5848" stroke="#222"/><circle cx="12" cy="5" r="2" fill="#a02020"/><circle cx="12" cy="10" r="2" fill="#c8a030"/><circle cx="12" cy="15" r="2.500" fill="#50e060"/>',
  t10: '<path d="M7 7l9 3v7H8z" fill="#999" stroke="#222"/><circle cx="12" cy="11" r="8" fill="none" stroke="#d02840" stroke-width="2.500"/><path d="M6 5l12 12" stroke="#d02840" stroke-width="2"/>',
  t11: '<path d="M9 2h12v12H9z" fill="#eee" stroke="#44508c"/><path d="M9 4h12" stroke="#44508c" stroke-width="2"/><path d="M4 7h12v13H4z" fill="#f4f0fa" stroke="#44508c"/><path d="M4 8h12M6 12h8M6 15h8" stroke="#44508c" stroke-width="2"/>'
};
document.querySelectorAll('button[data-i]').forEach(b => {
  if (!b.hasAttribute('aria-label')) b.setAttribute('aria-label', b.dataset.i);
  b.type = 'button';
  b.innerHTML = `<svg viewBox="0 0 24 22">${icons[b.dataset.i]}</svg>`;
});
const pin = '<path d="M21 3h6v5h-6zM19 8h10M24 8v5" stroke="#111" stroke-width="2" fill="none"/><path d="M37 4l6 6M43 4l-6 6" stroke="#111" stroke-width="2"/>';
document.querySelectorAll('.pins').forEach(s => {
  s.setAttribute('viewBox', '0 0 46 14');
  s.innerHTML = (s.classList.contains('to-left') ? '<path d="M12 3v8L8 7z" fill="#6b646a"/>' : '<path d="M5 11h8L9 7z" fill="#857d83"/>') + pin;
});
const list = document.querySelector('.items');
'5pol_durchsteck 96 97 98 99 102 103 400 411 504 1050 1674 1744 1902 1903 1905 1906 1907 1908_neu 1909 10116 10117'.split(' ').forEach(n => {
  list.insertAdjacentHTML('beforeend', `<li class="leaf"><svg class="ico"><use href="#i-chip"/></svg><span${n === '103' ? ' class="sel"' : ''}>${n}</span></li>`);
});
```
